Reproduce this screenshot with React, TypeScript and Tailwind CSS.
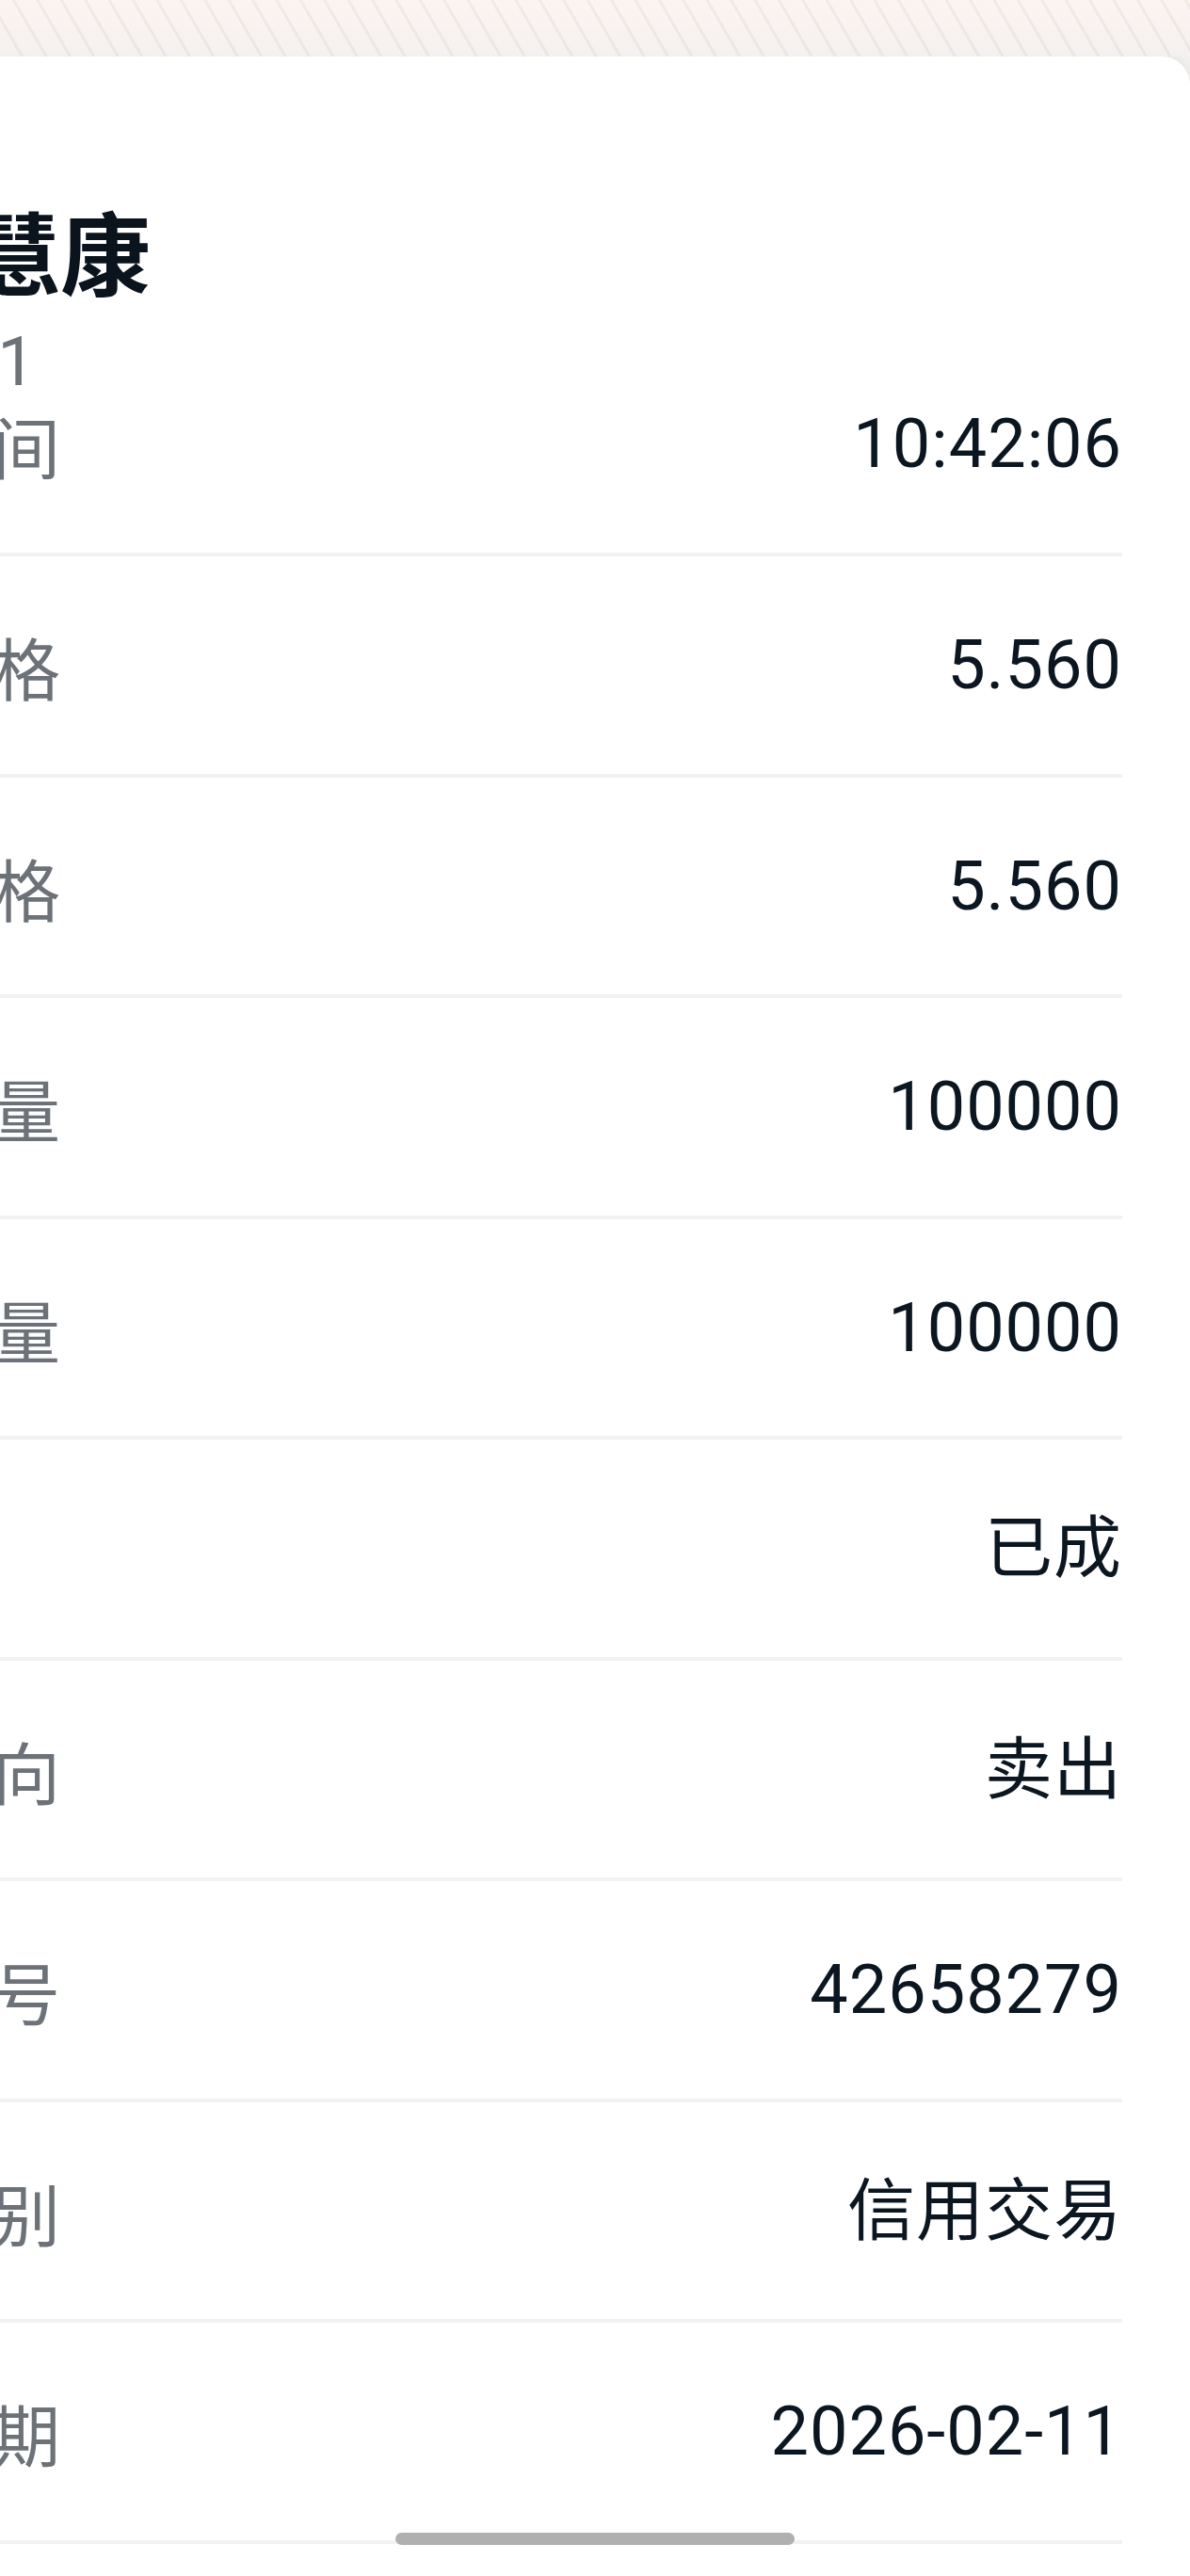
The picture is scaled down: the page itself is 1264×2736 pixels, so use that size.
import React from "react"

const rows = [
    { label: "成交时间", value: "10:42:06" },
    { label: "委托价格", value: "5.560" },
    { label: "成交价格", value: "5.560" },
    { label: "委托数量", value: "100000" },
    { label: "成交数量", value: "100000" },
    { label: "状态", value: "已成" },
    { label: "买卖方向", value: "卖出" },
    { label: "委托编号", value: "42658279" },
    { label: "交易类别", value: "信用交易" },
    { label: "委托日期", value: "2026-02-11" },
]

export default function App() {
    return (
        <div className="relative flex h-[2736px] w-[1264px] flex-col overflow-hidden bg-[#f4f2f1]">
            {/* Striped header band */}
            <div className="relative h-[60px] shrink-0 bg-gradient-to-b from-[#fdf4f1] to-[#f3f1f0]">
                <div className="absolute inset-0 bg-[image:repeating-linear-gradient(60deg,transparent_0,transparent_19px,rgba(120,90,80,0.07)_19px,rgba(120,90,80,0.07)_22px)]" />
            </div>

            {/* Detail card */}
            <div className="ml-[-260px] flex-1 rounded-tr-[30px] bg-white pl-[36px] pr-[72px] pt-[157px] shadow-[0_-2px_14px_rgba(0,0,0,0.07)] font-['Roboto','Noto_Sans_CJK_SC',sans-serif]">
                <h1 className="text-[96px] font-bold leading-none text-[#0b141c] font-['Noto_Sans_CJK_SC',sans-serif]">
                    创业慧康
                </h1>
                <div className="ml-[14px] mt-[36px] text-[72px] leading-none tracking-[1px] text-[#6d7278]">300451</div>

                {rows.map((row, index) => (
                    <div
                        key={index}
                        className={
                            index === 0
                                ? "flex h-[170px] items-start justify-between border-b-4 border-[#f2f2f2] pt-[15px]"
                                : "flex h-[234.5px] items-center justify-between border-b-4 border-[#f2f2f2] pt-[2px]"
                        }
                    >
                        <span className="text-[72px] leading-none text-[#6d7278] font-['Noto_Sans_CJK_SC',sans-serif]">
                            {row.label}
                        </span>
                        <span className="text-[72px] leading-none tracking-[1px] text-[#0b1620]">{row.value}</span>
                    </div>
                ))}
            </div>

            {/* Home indicator */}
            <div className="absolute bottom-[33px] left-1/2 h-[13px] w-[424px] -translate-x-1/2 rounded-full bg-[#b0b0b0]" />
        </div>
    )
}
